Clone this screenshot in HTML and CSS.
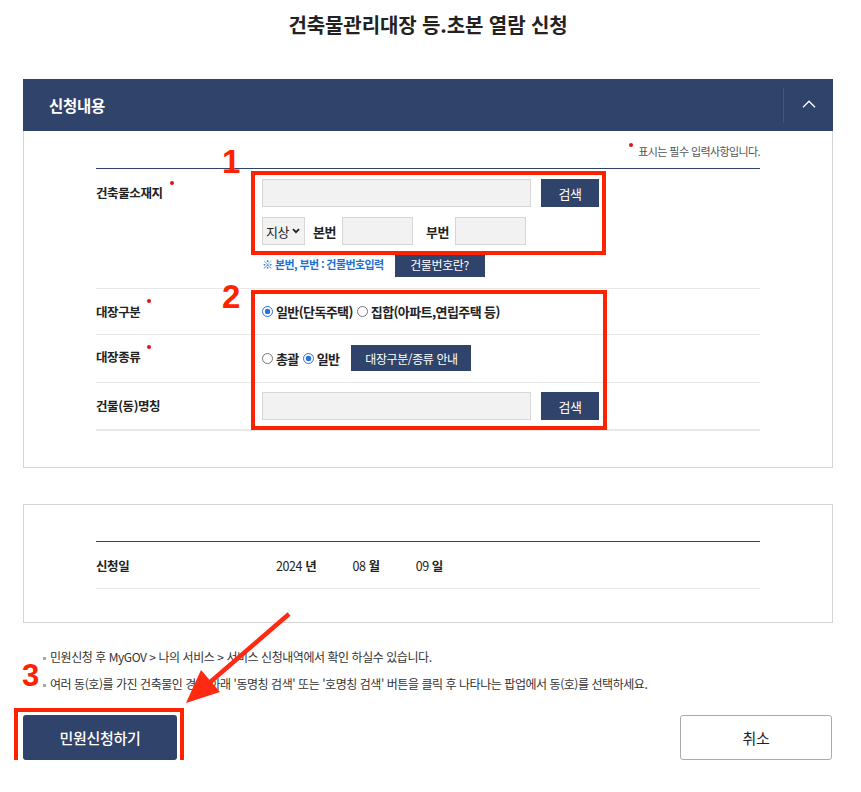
FILE: index.html
```html
<!DOCTYPE html>
<html lang="ko">
<head>
<meta charset="utf-8">
<title>건축물관리대장 등.초본 열람 신청</title>
<link rel="stylesheet" href="styles.css">
</head>
<body>
<div class="page">
  <h1 class="title">건축물관리대장 등.초본 열람 신청</h1>

  <section class="panel">
    <div class="panel-head">
      <h2>신청내용</h2>
      <button class="toggle" type="button" aria-label="접기">
        <svg width="14" height="8" viewBox="0 0 14 8"><polyline points="1,7.2 7,1.2 13,7.2" fill="none" stroke="#fff" stroke-width="1.3"/></svg>
      </button>
    </div>
    <div class="panel-body">
      <p class="req-note"><span class="dot"></span>표시는 필수 입력사항입니다.</p>
      <div class="form-table">
        <div class="row row-addr">
          <div class="label">건축물소재지<span class="dot"></span></div>
          <div class="field">
            <div class="line">
              <input class="inp inp-wide" type="text">
              <button class="btn btn-search" type="button">검색</button>
            </div>
            <div class="line">
              <div class="select">지상<svg width="8" height="6" viewBox="0 0 8 6"><polyline points="1,1.2 4,4.2 7,1.2" fill="none" stroke="#222" stroke-width="1.8"/></svg></div>
              <span class="sub-label first">본번</span>
              <input class="inp inp-num" type="text">
              <span class="sub-label">부번</span>
              <input class="inp inp-num" type="text">
            </div>
            <div class="line line-help">
              <span class="help">※ 본번, 부번 : 건물번호입력</span>
              <button class="btn btn-help" type="button">건물번호란?</button>
            </div>
          </div>
        </div>
        <div class="row row-kind">
          <div class="label">대장구분<span class="dot"></span></div>
          <div class="field radios">
            <span class="radio on"></span><span class="rtext">일반(단독주택)</span>
            <span class="radio"></span><span class="rtext">집합(아파트,연립주택 등)</span>
          </div>
        </div>
        <div class="row row-type">
          <div class="label">대장종류<span class="dot"></span></div>
          <div class="field radios">
            <span class="radio"></span><span class="rtext">총괄</span>
            <span class="radio on"></span><span class="rtext">일반</span>
            <button class="btn btn-guide" type="button">대장구분/종류 안내</button>
          </div>
        </div>
        <div class="row row-name last">
          <div class="label">건물(동)명칭</div>
          <div class="field">
            <div class="line">
              <input class="inp inp-wide" type="text">
              <button class="btn btn-search" type="button">검색</button>
            </div>
          </div>
        </div>
      </div>
    </div>
  </section>

  <section class="panel2">
    <div class="date-table">
      <div class="date-row">
        <div class="dlabel">신청일</div>
        <div class="dvalue">
          <span class="dseg">2024 <b>년</b></span>
          <span class="dseg">08 <b>월</b></span>
          <span class="dseg">09 <b>일</b></span>
        </div>
      </div>
    </div>
  </section>

  <ul class="notes">
    <li>민원신청 후 MyGOV &gt; 나의 서비스 &gt; 서비스 신청내역에서 확인 하실수 있습니다.</li>
    <li>여러 동(호)를 가진 건축물인 경우 아래 '동명칭 검색' 또는 '호명칭 검색' 버튼을 클릭 후 나타나는 팝업에서 동(호)를 선택하세요.</li>
  </ul>

  <div class="actions">
    <button class="btn-primary" type="button">민원신청하기</button>
    <button class="btn-cancel" type="button">취소</button>
  </div>
</div>

<div class="annotations" aria-hidden="true">
  <div class="mark box1"></div>
  <div class="mark box2"></div>
  <div class="mark box3"></div>
  <span class="num n1">1</span>
  <span class="num n2">2</span>
  <span class="num n3">3</span>
  <svg class="arrow" width="861" height="792" viewBox="0 0 861 792">
    <line x1="289" y1="614" x2="208" y2="684" stroke="#ff2a12" stroke-width="4.5"/>
    <polygon points="186,703 201,670 220,692" fill="#ff2a12"/>
  </svg>
</div>
</body>
</html>
```

FILE: styles.css
```css
* { box-sizing: border-box; }

body {
  margin: 0;
  position: relative;
  background: #fff;
  color: #222;
  font-family: "Noto Sans CJK KR", "Noto Sans", "Liberation Sans", sans-serif;
}

.page {
  width: 810px;
  margin-left: 23px;
}

.title {
  margin: 0;
  height: 79px;
  padding-top: 11px;
  text-align: center;
  font-size: 20px;
  line-height: 28px;
  font-weight: 700;
  letter-spacing: -0.1px;
  color: #222;
}

/* panel header */
.panel-head {
  height: 52px;
  background: #2f436b;
  display: flex;
  align-items: center;
  justify-content: space-between;
  padding-left: 26px;
}
.panel-head h2 {
  margin: 0;
  color: #fff;
  font-size: 15.5px;
  font-weight: 700;
  letter-spacing: -0.3px;
}
.toggle {
  width: 50px;
  height: 35px;
  border: none;
  border-left: 1px solid #44567c;
  background: transparent;
  display: flex;
  align-items: center;
  justify-content: center;
  padding: 0 0 2px;
}

.panel-body {
  border: 1px solid #d5d5d5;
  border-top: none;
  padding: 12px 72px 36px;
}

.dot {
  display: inline-block;
  width: 4px;
  height: 4px;
  border-radius: 50%;
  background: #e5101a;
  vertical-align: top;
}

.req-note {
  margin: 0 0 9px;
  text-align: right;
  font-size: 11px;
  line-height: 16px;
  color: #555;
  letter-spacing: -0.6px;
}
.req-note .dot { margin: 0 5px 0 0; }

.form-table { border-top: 1px solid #2f436b; }

.row {
  display: flex;
  border-bottom: 1px solid #e8e8e8;
}
.row.last { border-bottom: 2px solid #e8e8e8; }
.row-addr { padding: 10px 0 11px; }
.row-kind { padding: 10px 0; }
.row-type { padding: 10px 0 11px; }
.row-name { padding: 9px 0; }

.label {
  width: 166px;
  flex: none;
  font-size: 12.5px;
  font-weight: 700;
  letter-spacing: -0.4px;
  line-height: 28px;
  color: #222;
}
.label .dot { margin: 2px 0 0 7px; }
.row-kind .label { line-height: 25px; }
.row-kind .label .dot, .row-type .label .dot { margin-top: 0; }
.row-type .label { line-height: 24px; }

.field { display: flex; flex-direction: column; }
.line { display: flex; align-items: center; height: 28px; }
.line + .line { margin-top: 10px; }
.line.line-help { margin-top: 6px; height: 26px; }

.inp {
  height: 28px;
  background: #f2f2f2;
  border: 1px solid #d6d6d6;
  padding: 0 6px;
  font: inherit;
  outline: none;
}
.inp-wide { width: 269px; }
.inp-num { width: 71px; }

.btn {
  border: none;
  background: #2f436b;
  color: #fff;
  font-family: inherit;
  font-size: 12px;
  letter-spacing: -0.4px;
  padding: 0;
}
.btn-search { width: 58px; height: 28px; margin-left: 10px; font-size: 13px; }
.btn-help { width: 90px; height: 26px; margin-left: 11px; }
.btn-guide { width: 120px; height: 26px; margin-left: 8px; }

.select {
  width: 43px;
  height: 28px;
  background: #f2f2f2;
  border: 1px solid #d6d6d6;
  display: flex;
  align-items: center;
  padding-left: 3px;
  font-size: 13px;
  letter-spacing: -0.5px;
  color: #222;
  gap: 3px;
}
.sub-label {
  font-size: 13px;
  font-weight: 700;
  letter-spacing: -0.5px;
  margin: 0 6px 0 13px;
}
.sub-label.first { margin-left: 8px; }

.help {
  font-size: 11px;
  font-weight: 700;
  color: #1d6fd1;
  letter-spacing: -0.6px;
}

.radios {
  flex-direction: row;
  align-items: center;
}
.row-kind .radios { height: 25px; }
.row-type .radios { height: 26px; }

.radio {
  width: 11px;
  height: 11px;
  border-radius: 50%;
  border: 1px solid #777;
  background: #fff;
  margin-right: 3px;
  flex: none;
}
.radio.on {
  border-color: #2a72e6;
  background: radial-gradient(circle, #2a72e6 0 2.6px, #fff 3.1px);
}
.rtext {
  font-size: 13px;
  font-weight: 700;
  letter-spacing: -0.6px;
  margin-right: 4px;
  color: #222;
}

/* second panel */
.panel2 {
  margin-top: 36px;
  border: 1px solid #d5d5d5;
  padding: 36px 72px 33px;
}
.date-table { border-top: 1px solid #2f436b; }
.date-row {
  display: flex;
  align-items: center;
  height: 47px;
  border-bottom: 1px solid #e8e8e8;
}
.dlabel {
  width: 180px;
  font-size: 12.5px;
  font-weight: 700;
  letter-spacing: -0.4px;
}
.dvalue { display: flex; font-size: 12.5px; letter-spacing: -0.4px; }
.dseg { margin-right: 36px; }
.dseg b { font-weight: 700; }

.notes {
  list-style: none;
  margin: 20px 0 0;
  padding: 0 0 0 20px;
}
.notes li {
  font-size: 12px;
  line-height: 27px;
  letter-spacing: -0.45px;
  color: #333;
  display: flex;
  align-items: center;
}
.notes li::before {
  content: "";
  width: 3px;
  height: 3px;
  background: #aaa;
  margin: 4px 4px 0 0;
  flex: none;
}

.actions {
  margin-top: 18px;
  display: flex;
  justify-content: space-between;
}
.btn-primary, .btn-cancel {
  height: 45px;
  border-radius: 3px;
  font-family: inherit;
  font-size: 15px;
  letter-spacing: -0.3px;
}
.btn-primary {
  width: 154px;
  border: none;
  background: #2f436b;
  color: #fff;
  font-weight: 500;
}
.btn-cancel {
  width: 152px;
  margin-right: 1px;
  border: 1px solid #aaa;
  background: #fff;
  color: #222;
}

/* red annotations drawn over the screenshot */
.annotations {
  position: absolute;
  left: 0;
  top: 0;
  width: 861px;
  height: 792px;
  pointer-events: none;
}
.mark {
  position: absolute;
  border: 4.5px solid #ff2200;
}
.box1 { left: 251px; top: 171px; width: 355px; height: 84px; }
.box2 { left: 251px; top: 290px; width: 356px; height: 140px; }
.box3 { left: 14px; top: 708px; width: 170px; height: 59px; }
.num {
  position: absolute;
  font-family: "Liberation Sans", Arial, sans-serif;
  font-weight: 700;
  font-size: 33px;
  line-height: 1;
  color: #ff2200;
}
.n1 { left: 222px; top: 145px; }
.n2 { left: 222px; top: 280px; }
.n3 { left: 22px; top: 660px; font-size: 31px; }
.arrow { position: absolute; left: 0; top: 0; }
```
